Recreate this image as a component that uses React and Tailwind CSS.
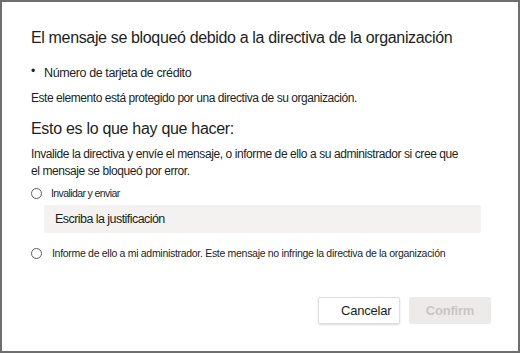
import React, { useState } from "react";

const Radio = ({ checked, onClick }) => (
  <button
    type="button"
    onClick={onClick}
    className="w-[11px] h-[11px] rounded-full border border-[#605e5c] bg-white flex items-center justify-center shrink-0"
  >
    {checked && <span className="w-[5px] h-[5px] rounded-full bg-[#323130]" />}
  </button>
);

const App = () => {
  const [choice, setChoice] = useState("");
  const [reason, setReason] = useState("");

  return (
    <div
      className="w-[520px] h-[353px] bg-white border-2 border-[#6e6e6e] text-[#201f1e] flex flex-col"
      style={{ fontFamily: '"Liberation Sans", Arial, sans-serif' }}
    >
      <div className="pl-[29px] pr-[26px] pt-[26px] flex-1 flex flex-col">
        <h1 className="text-[16px] leading-[20px] tracking-[-0.35px]">
          El mensaje se bloqueó debido a la directiva de la organización
        </h1>

        <div className="mt-[17px] flex items-center text-[12.5px] tracking-[-0.4px] leading-[16px]">
          <span className="w-[13px] text-[12px] -mt-[4px]">•</span>
          <span>Número de tarjeta de crédito</span>
        </div>

        <p className="mt-[9px] text-[12px] tracking-[-0.45px] leading-[16px]">
          Este elemento está protegido por una directiva de su organización.
        </p>

        <h2 className="mt-[13px] text-[16px] leading-[20px] tracking-[-0.3px]">
          Esto es lo que hay que hacer:
        </h2>

        <p className="mt-[7px] text-[12px] leading-[17px] tracking-[-0.42px] w-[434px]">
          Invalide la directiva y envíe el mensaje, o informe de ello a su administrador si cree que el mensaje se bloqueó por error.
        </p>

        <label className="mt-[6px] flex items-center gap-[9px] text-[10.5px] tracking-[-0.6px]">
          <Radio checked={choice === "override"} onClick={() => setChoice("override")} />
          <span>Invalidar y enviar</span>
        </label>

        <input
          type="text"
          value={reason}
          onChange={(e) => setReason(e.target.value)}
          placeholder="Escriba la justificación"
          className="mt-[3px] ml-[13px] w-[437px] h-[28px] bg-[#f3f2f1] rounded-[2px] px-[11px] text-[12.5px] tracking-[-0.55px] outline-none placeholder:text-[#201f1e]"
        />

        <label className="mt-[13px] flex items-center gap-[10px] text-[10.5px] tracking-[-0.3px]">
          <Radio checked={choice === "report"} onClick={() => setChoice("report")} />
          <span>Informe de ello a mi administrador. Este mensaje no infringe la directiva de la organización</span>
        </label>
      </div>

      <div className="flex justify-end gap-[9px] pr-[27px] pb-[27px]">
        <button className="w-[82px] h-[27px] bg-white border border-[#e1dfdd] rounded-[2px] shadow-[0_1px_2px_rgba(0,0,0,0.15)] text-[13px] tracking-[-0.2px] pl-[22px] text-left">
          Cancelar
        </button>
        <button
          disabled={!choice}
          className="w-[82px] h-[27px] bg-[#edebe9] rounded-[2px] text-[13px] font-bold text-[#c8c6c4] tracking-[-0.2px]"
        >
          Confirm
        </button>
      </div>
    </div>
  );
};

export default App;
